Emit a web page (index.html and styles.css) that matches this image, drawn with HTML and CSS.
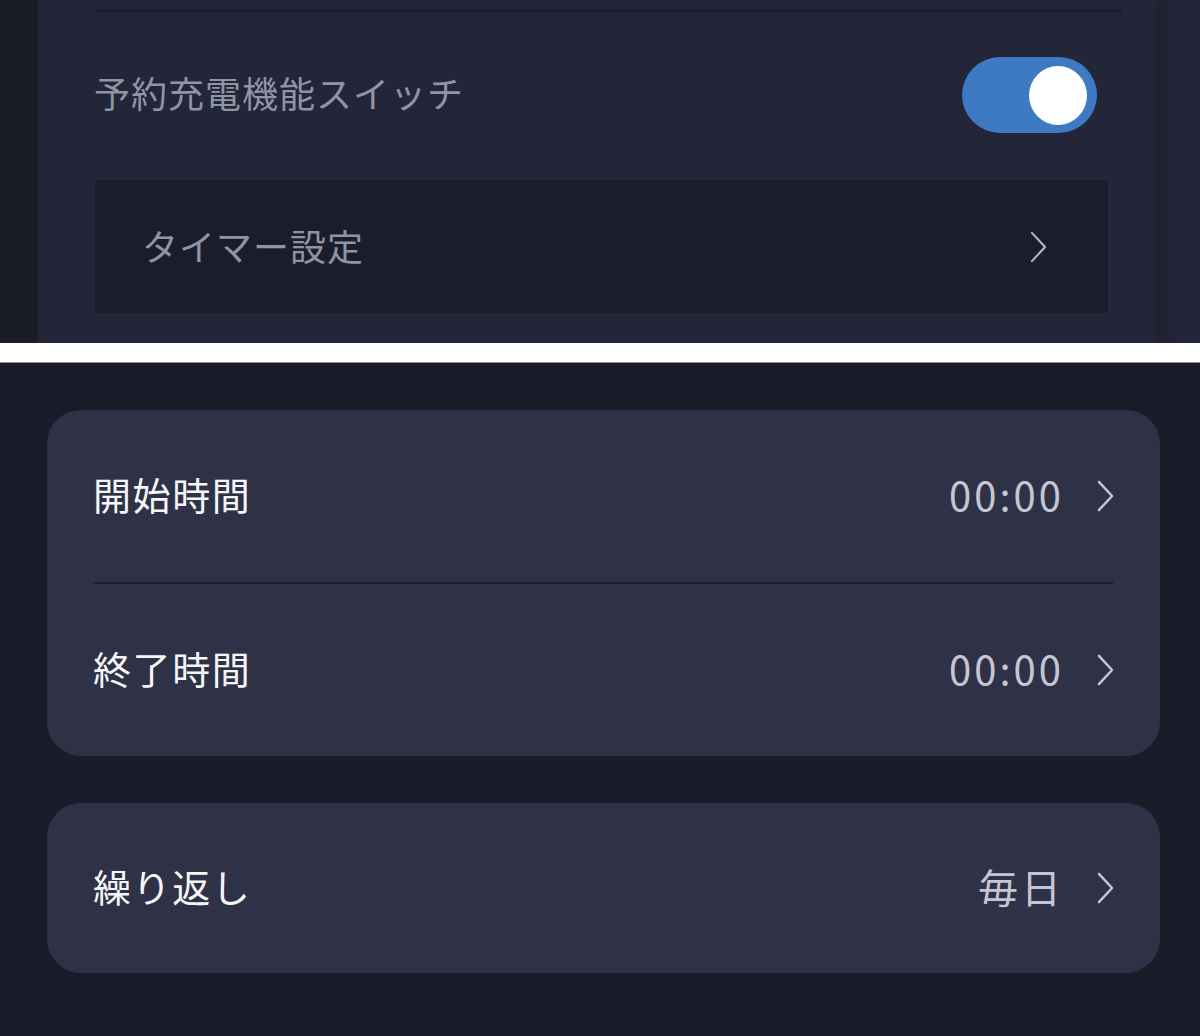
FILE: index.html
```html
<!DOCTYPE html>
<html lang="ja">
<head>
    <meta charset="UTF-8">
    <meta name="viewport" content="width=device-width, initial-scale=1.0">
    <title>予約充電</title>
    <link rel="stylesheet" href="styles.css">
</head>
<body>

    <!-- charging settings screen -->
    <section class="top">
        <div class="sheet">
            <div class="rule"></div>

            <div class="switch-row">
                <span class="switch-label">予約充電機能スイッチ</span>
                <div class="toggle on"><div class="knob"></div></div>
            </div>

            <div class="timer-link">
                <span>タイマー設定</span>
                <svg class="chev thin" viewBox="0 0 18 34"><path d="M2 2 L16 17 L2 32"/></svg>
            </div>
        </div>
    </section>

    <div class="gap"></div>

    <!-- timer screen -->
    <section class="bottom">
        <div class="card">
            <div class="row">
                <span class="title">開始時間</span>
                <span class="value">00:00</span>
                <svg class="chev" viewBox="0 0 18 34"><path d="M2 2 L16 17 L2 32"/></svg>
            </div>
            <div class="divider"></div>
            <div class="row">
                <span class="title">終了時間</span>
                <span class="value">00:00</span>
                <svg class="chev" viewBox="0 0 18 34"><path d="M2 2 L16 17 L2 32"/></svg>
            </div>
        </div>

        <div class="card">
            <div class="row short">
                <span class="title">繰り返し</span>
                <span class="value">毎日</span>
                <svg class="chev" viewBox="0 0 18 34"><path d="M2 2 L16 17 L2 32"/></svg>
            </div>
        </div>
    </section>

</body>
</html>
```

FILE: styles.css
```css
body { margin: 0; background-color: #1b1c2a; font-family: "Noto Sans CJK JP", "Noto Sans", sans-serif; }

.top { height: 343px; background: linear-gradient(to right, #1a1c27 0, #1a1c27 36px, #20222f 44px, #232538 50px); padding-right: 44px; }
.sheet { height: 343px; margin-left: 38px; background-color: #232538; box-shadow: 8px 0 10px #1f2130; display: flex; flex-direction: column; }
.rule { height: 3px; margin: 9px 34px 0 57px; background-color: #1a1c29; }

.switch-row { display: flex; align-items: center; justify-content: space-between; margin: 44px 59px 0 56px; height: 76px; }
.switch-label { font-size: 36px; color: #9094a5; letter-spacing: 1px; margin-top: -4px; }
.toggle { width: 135px; height: 76px; border-radius: 38px; background-color: #3e79c4; position: relative; margin-top: 2px; }
.toggle .knob { position: absolute; top: 9px; right: 10px; width: 58px; height: 59px; border-radius: 50%; background-color: #fff; }

.timer-link { height: 133px; margin: 48px 48px 0 57px; background-color: #1c1d2b; display: flex; align-items: center; justify-content: space-between; padding: 0 61px 0 47px; font-size: 36px; color: #9094a5; }
.timer-link span { letter-spacing: 1px; margin-top: -4px; }

.gap { height: 19px; background-color: #fff; border-bottom: 1px solid #8e8f97; }

.bottom { height: 672px; padding: 47px 40px 0 47px; box-sizing: border-box; }
.card { background-color: #2f3146; border-radius: 34px; margin-bottom: 47px; }
.row { height: 172px; display: flex; align-items: center; padding: 0 46px; }
.row.short { height: 170px; }
.title { flex: 1; font-size: 38px; font-weight: 400; color: #f6f6fa; letter-spacing: 1.6px; margin-top: -5px; }
.value { font-size: 40px; color: #c4c5d5; letter-spacing: 3px; margin-right: 33px; margin-top: -5px; }
.divider { height: 2px; margin: 0 47px 0 46px; background-color: #1c1e2c; }

.chev { width: 17px; height: 32px; fill: none; stroke: #c4c5d5; stroke-width: 2.6; stroke-linecap: round; stroke-linejoin: round; }
.chev.thin { stroke: #b5b7c4; stroke-width: 2.2; }
```
